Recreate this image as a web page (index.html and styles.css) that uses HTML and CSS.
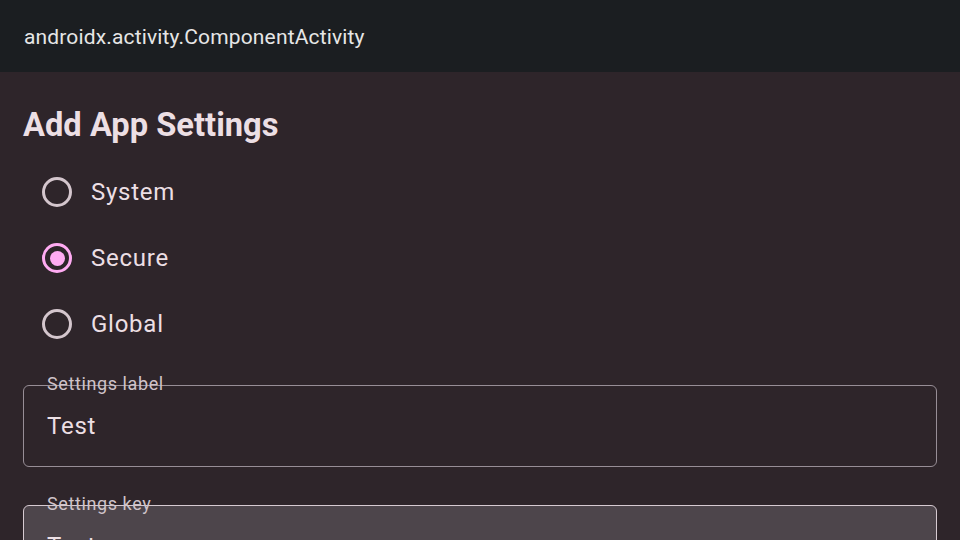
FILE: index.html
```html
<!DOCTYPE html>
<html>
<head>
<meta charset="utf-8">
<link rel="stylesheet" href="styles.css">
</head>
<body>
<header class="topbar">androidx.activity.ComponentActivity</header>
<main class="content">
  <h1 class="title">Add App Settings</h1>
  <div class="radios">
    <div class="radio-row"><span class="radio"></span><span class="radio-label">System</span></div>
    <div class="radio-row"><span class="radio selected"><span class="dot"></span></span><span class="radio-label">Secure</span></div>
    <div class="radio-row"><span class="radio"></span><span class="radio-label">Global</span></div>
  </div>
  <div class="field">
    <span class="field-label">Settings label</span>
    <span class="field-value">Test</span>
  </div>
  <div class="field filled">
    <span class="field-label">Settings key</span>
    <span class="field-value">Test</span>
  </div>
</main>
</body>
</html>
```
FILE: styles.css
```css
html, body {
  margin: 0;
  padding: 0;
  width: 960px;
  height: 540px;
  overflow: hidden;
  background: #2e252a;
  font-family: Roboto, "Noto Sans", sans-serif;
}
.topbar {
  height: 72px;
  background: #1b1e21;
  color: #e6e6e6;
  font-size: 21px;
  letter-spacing: 0.15px;
  padding-left: 24px;
  padding-top: 2px;
  display: flex;
  align-items: center;
  box-sizing: border-box;
}
.content {
  padding: 0 23px;
}
.title {
  margin: 0;
  padding-top: 33px;
  font-size: 32.7px;
  line-height: 40px;
  font-weight: 700;
  color: #ecdfe4;
  height: 54px;
}
.radios {
  display: flex;
  flex-direction: column;
}
.radio-row {
  height: 66px;
  display: flex;
  align-items: center;
  padding-left: 19px;
  gap: 19px;
}
.radio {
  width: 30px;
  height: 30px;
  box-sizing: border-box;
  border: 3px solid #d4c6cd;
  border-radius: 50%;
  display: flex;
  align-items: center;
  justify-content: center;
}
.radio.selected {
  border-color: #ffabf2;
}
.dot {
  width: 15px;
  height: 15px;
  border-radius: 50%;
  background: #ffabf2;
}
.radio-label {
  font-size: 24px;
  letter-spacing: 0.75px;
  color: #ecdfe4;
}
.field {
  position: relative;
  margin-top: 28px;
  height: 82px;
  box-sizing: border-box;
  border: 1.5px solid #978e96;
  border-radius: 6px;
  display: flex;
  align-items: center;
  padding-left: 23px;
}
.field + .field {
  margin-top: 38px;
}
.field.filled {
  background: #4d454b;
  border-color: #d6cad1;
}
.field-label {
  position: absolute;
  left: 23px;
  top: -12px;
  font-size: 18px;
  letter-spacing: 0.6px;
  line-height: 20px;
  color: #cfc3c9;
}
.field-value {
  font-size: 24px;
  color: #ecdfe4;
  letter-spacing: 0.75px;
}
```
